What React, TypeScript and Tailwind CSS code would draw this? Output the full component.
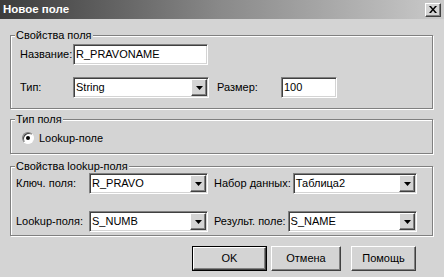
import React from "react";

const sunken =
  "bg-white border border-t-[#808080] border-l-[#808080] border-b-white border-r-white shadow-[inset_1px_1px_0_#404040,inset_-1px_-1px_0_#d4d4d4]";
const raised =
  "bg-[#d4d4d4] border border-t-white border-l-white border-b-[#404040] border-r-[#404040] shadow-[inset_-1px_-1px_0_#808080]";

function Edit({ value, className = "" }: { value: string; className?: string }) {
  return (
    <div className={`h-[21px] shrink-0 flex items-center pl-[2px] ${sunken} ${className}`}>
      {value}
    </div>
  );
}

function Combo({ value, className = "" }: { value: string; className?: string }) {
  return (
    <div className={`h-[21px] flex items-center p-px ${sunken} ${className}`}>
      <span className="flex-1 pl-px">{value}</span>
      <span className={`w-[16px] h-[17px] flex items-center justify-center ${raised}`}>
        <svg width="7" height="4" viewBox="0 0 7 4">
          <polygon points="0,0 7,0 3.5,4" fill="#000" />
        </svg>
      </span>
    </div>
  );
}

function Group({
  title,
  className = "",
  children,
}: {
  title: string;
  className?: string;
  children: React.ReactNode;
}) {
  return (
    <fieldset
      className={`ml-[10px] w-[423px] border border-[#808080] shadow-[inset_1px_1px_0_white,1px_1px_0_white] ${className}`}
    >
      <legend className="ml-[4px] px-px h-[14px] leading-[14px] bg-[#d4d4d4]">{title}</legend>
      {children}
    </fieldset>
  );
}

function Button({ label, isDefault, className = "" }: { label: string; isDefault?: boolean; className?: string }) {
  return (
    <div className={`h-[25px] ${isDefault ? "border border-black" : ""} ${className}`}>
      <div className={`h-full flex items-center justify-center ${raised}`}>{label}</div>
    </div>
  );
}

export default function App() {
  return (
    <div
      className="w-[444px] h-[277px] bg-[#d4d4d4] text-[11px] text-black whitespace-nowrap overflow-hidden"
      style={{ fontFamily: '"Liberation Sans", Arial, sans-serif' }}
    >
      {/* заголовок */}
      <div className="h-[19px] flex items-center justify-between pl-[3px] pr-[3px] bg-gradient-to-r from-[#3c3c3c] via-[#8a8a8a] to-[#cacaca]">
        <span className="font-bold text-white text-[11.5px]">Новое поле</span>
        <span className={`w-[16px] h-[14px] flex items-center justify-center ${raised}`}>
          <svg width="8" height="7" viewBox="0 0 8 7">
            <path d="M0 0h2l2 2.5L6 0h2L5 3.5 8 7H6L4 4.5 2 7H0l3-3.5z" fill="#000" />
          </svg>
        </span>
      </div>

      <Group title="Свойства поля" className="mt-[9px]">
        <div className="pl-[9px] pt-[2px] pb-[10px] flex flex-col gap-[12px]">
          <div className="flex items-center">
            <span className="w-[53px] shrink-0">Название:</span>
            <Edit value="R_PRAVONAME" className="w-[135px]" />
          </div>
          <div className="flex items-center">
            <span className="w-[53px] shrink-0">Тип:</span>
            <Combo value="String" className="w-[136px] shrink-0" />
            <span className="ml-[8px] w-[64px] shrink-0">Размер:</span>
            <Edit value="100" className="w-[56px]" />
          </div>
        </div>
      </Group>

      <Group title="Тип поля" className="mt-[3px]">
        <div className="pl-[11px] pt-[5px] pb-[8px] flex items-center gap-[5px]">
          <span className="w-[12px] h-[12px] rounded-full bg-white border border-t-[#808080] border-l-[#808080] border-b-white border-r-white shadow-[inset_1px_1px_0_#404040] flex items-center justify-center">
            <span className="w-[4px] h-[4px] rounded-full bg-black" />
          </span>
          <span className="leading-[14px]">Lookup-поле</span>
        </div>
      </Group>

      <Group title="Свойства lookup-поля" className="mt-[5px]">
        <div className="pl-[5px] pb-[3px] flex flex-col gap-[17px]">
          <div className="flex items-center">
            <span className="w-[73px] shrink-0">Ключ. поля:</span>
            <Combo value="R_PRAVO" className="w-[119px] shrink-0" />
            <div className="ml-[6px] w-[203px] flex items-center gap-[2px]">
              <span>Набор данных:</span>
              <Combo value="Таблица2" className="flex-1" />
            </div>
          </div>
          <div className="flex items-center">
            <span className="w-[73px] shrink-0">Lookup-поля:</span>
            <Combo value="S_NUMB" className="w-[119px] shrink-0" />
            <div className="ml-[6px] w-[203px] flex items-center gap-[2px]">
              <span>Результ. поле:</span>
              <Combo value="S_NAME" className="flex-1" />
            </div>
          </div>
        </div>
      </Group>

      <div className="mt-[10px] pl-[192px] flex">
        <Button label="OK" isDefault className="w-[75px]" />
        <Button label="Отмена" className="ml-[4px] w-[70px]" />
        <Button label="Помощь" className="ml-[10px] w-[65px]" />
      </div>
    </div>
  );
}
